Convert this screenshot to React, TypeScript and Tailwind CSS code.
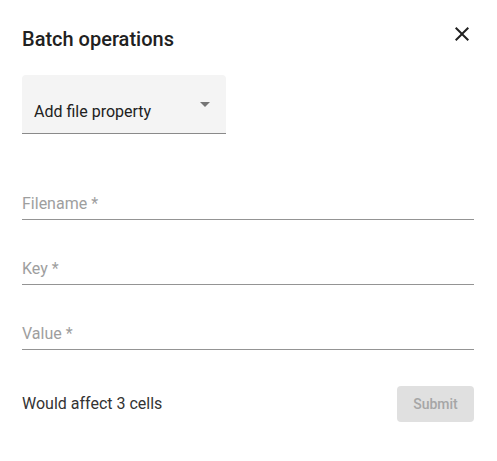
import React from 'react';

const font = { fontFamily: 'Roboto, "Liberation Sans", sans-serif' };

const Field: React.FC<{ label: string }> = ({ label }) => (
    <div className="border-b border-[#949494] pb-[3px]">
        <div className="text-[16px] leading-[24px] text-[#9e9e9e]">{label}</div>
    </div>
);

const App: React.FC = () => {
    return (
        <div className="w-[497px] h-[461px] bg-white pl-[22px] pr-[23px]" style={font}>
            {/* Header */}
            <div className="flex justify-between items-start pt-[23px]">
                <h2 className="text-[20px] leading-[32px] font-medium text-[#212121]">Batch operations</h2>
                <button className="w-6 h-6 -mt-px text-[#212121]">
                    <svg viewBox="0 0 24 24" className="w-6 h-6" fill="currentColor">
                        <path d="M19 6.41 17.59 5 12 10.59 6.41 5 5 6.41 10.59 12 5 17.59 6.41 19 12 13.41 17.59 19 19 17.59 13.41 12z" />
                    </svg>
                </button>
            </div>

            {/* Select */}
            <div className="mt-[20px] w-[204px] h-[59px] bg-[#f4f4f4] rounded-t-[4px] border-b border-[#8a8a8a] relative pt-[25px] pl-[12px]">
                <div className="text-[16px] leading-[24px] text-[#212121]">Add file property</div>
                <svg viewBox="0 0 24 24" className="w-6 h-6 absolute right-[9px] top-[17px] text-[#757575]" fill="currentColor">
                    <path d="M7 10l5 5 5-5z" />
                </svg>
            </div>

            {/* Fields */}
            <div className="mt-[58px] flex flex-col gap-[37px]">
                <Field label="Filename *" />
                <Field label="Key *" />
                <Field label="Value *" />
            </div>

            {/* Footer */}
            <div className="mt-[36px] flex justify-between items-center">
                <span className="text-[16px] leading-[24px] text-[#333333]">Would affect 3 cells</span>
                <button className="w-[77px] h-[36px] rounded-[4px] bg-[#e0e0e0] text-[14px] font-medium text-[#a6a6a6]" disabled>
                    Submit
                </button>
            </div>
        </div>
    );
};

export default App;
